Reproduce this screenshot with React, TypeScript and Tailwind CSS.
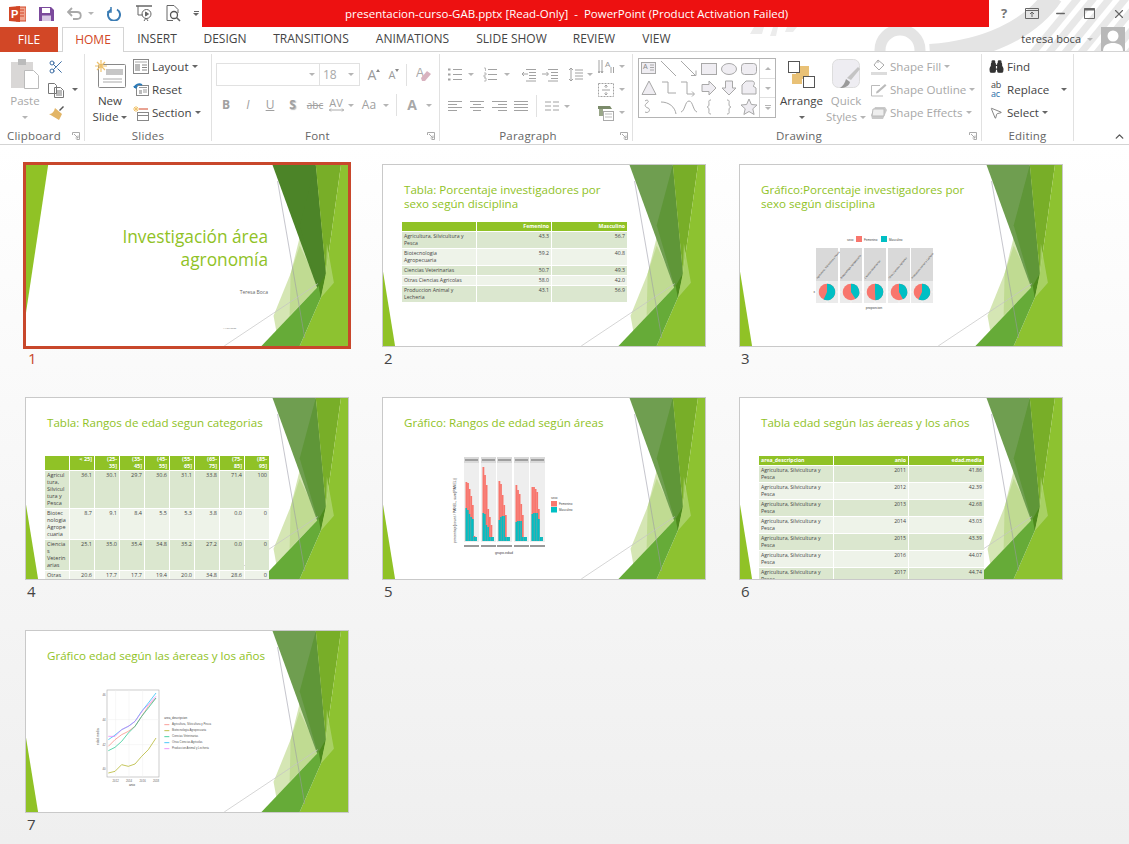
import React from 'react';
import { Binoculars, Scissors, X, Minus, ChevronUp, MousePointer2 } from 'lucide-react';

const tabs = [
  { label: 'INSERT', w: 'w-[66px]' },
  { label: 'DESIGN', w: 'w-[70px]' },
  { label: 'TRANSITIONS', w: 'w-[102px]' },
  { label: 'ANIMATIONS', w: 'w-[101px]' },
  { label: 'SLIDE SHOW', w: 'w-[97px]' },
  { label: 'REVIEW', w: 'w-[68px]' },
  { label: 'VIEW', w: 'w-[57px]' },
];

const GREEN = '#90c226';
const RED = '#f8766d';
const TEAL = '#00bfc4';
const G = '#a2a2a2';

const Caret = ({ dark, className = '' }: { dark?: boolean; className?: string }) => (
  <span className={`inline-block h-0 w-0 border-x-[3px] border-t-[3px] border-x-transparent ${dark ? 'border-t-[#666]' : 'border-t-[#b5b5b5]'} ${className}`} />
);

const Group = ({ label, launcher, className, children }: { label: string; launcher?: boolean; className: string; children: React.ReactNode }) => (
  <div className={`flex h-[87px] shrink-0 flex-col border-r border-[#e1e1e1] ${className}`}>
    <div className="flex-1 pt-px">{children}</div>
    <div className="-mb-[2px] flex h-[15px] items-center text-[11.5px] leading-none text-[#666]">
      <span className="flex-1 text-center tracking-[0.2px]">{label}</span>
      {launcher && (
        <span className="flex w-[16px] justify-center">
          <svg width="8" height="8" viewBox="0 0 8 8" fill="none" stroke="#aaa"><path d="M.5 3V.5H7.5V7.5H4.5M2 2l4 4M6 3.5V6H3.5" /></svg>
        </span>
      )}
    </div>
  </div>
);

const Row = ({ icon, text, dim, caret, className = '' }: { icon: React.ReactNode; text: string; dim?: boolean; caret?: React.ReactNode; className?: string }) => (
  <div className={`flex h-[23px] items-center whitespace-nowrap text-[11.6px] ${dim ? 'text-[#a8a8a8]' : 'text-[#444]'} ${className}`}>
    <span className="flex w-[16px] justify-center">{icon}</span>
    <span className="ml-[3px]">{text}</span>
    {caret}
  </div>
);

const Lines = ({ rows }: { rows: number[][] }) => (
  <svg width="15" height="15" viewBox="0 0 15 15" stroke={G} strokeWidth="1" fill="none">
    {rows.map((r, i) => <path key={i} d={`M${r[0]} ${2.5 + i * 3}H${r[1]}`} />)}
  </svg>
);

const LayoutIcon = () => (
  <svg width="16" height="15" viewBox="0 0 16 15" fill="none"><rect x=".5" y=".5" width="15" height="14" fill="#fff" stroke="#888" /><path d="M2 3h12" stroke="#aaa" /><rect x="2" y="5" width="5" height="7" fill="#bbb" /><path d="M9 6h5M9 8.5h5M9 11h5" stroke="#888" /></svg>
);
const ResetIcon = () => (
  <svg width="16" height="15" viewBox="0 0 16 15" fill="none"><rect x="3.5" y="3.5" width="12" height="10" fill="#fff" stroke="#888" /><rect x="6" y="8" width="3" height="4" fill="#bbb" /><path d="M10 8h4M10 10h4M6 5.5h8" stroke="#999" /><path d="M1.5 6C2 2.5 6 1 9 3" stroke="#2a7ab8" strokeWidth="1.6" /><path d="M0 4l3 3 2-3z" fill="#2a7ab8" /></svg>
);
const SectionIcon = () => (
  <svg width="16" height="16" viewBox="0 0 16 16" fill="none"><path d="M3 1v6M0 4h6M1 2l4 4M5 2l-4 4" stroke="#f0c36d" /><path d="M6 4h9" stroke="#d24726" /><rect x="4.5" y="7.5" width="11" height="3" stroke="#888" fill="#fff" /><rect x="4.5" y="10.5" width="11" height="5" stroke="#888" fill="#fff" /></svg>
);

const Gallery = () => {
  const s = { fill: 'none', stroke: '#a8a8a8', strokeWidth: 1 };
  const f = { fill: '#efedf2', stroke: '#a8a8a8', strokeWidth: 1 };
  const cells = [
    <g><rect x="2.5" y="3.5" width="14" height="11" {...f} /><path d="M11 6h4M11 8.5h4M11 11h4" {...s} /><text x="4" y="10" fontSize="7" fill="#888" fontFamily="Liberation Sans">A</text></g>,
    <path d="M2 2l15 15" {...s} />,
    <path d="M2 2l15 15M12 16.5h5v-5" {...s} />,
    <rect x="2.5" y="4.5" width="15" height="11" {...f} />,
    <ellipse cx="10" cy="10" rx="7.5" ry="5.5" {...f} />,
    <rect x="2.5" y="4.5" width="15" height="11" rx="3" {...f} />,
    <path d="M3 16.5L10 3l7 13.5z" {...f} />,
    <path d="M3 4h6v11h8" {...s} />,
    <path d="M2 4h6v12h7M13 13.5l2.5 2.5-2.5 2.5" {...s} />,
    <path d="M3 6.5h7V3l7 7-7 7v-3.5H3z" {...f} />,
    <path d="M6.5 3h7v7H17l-7 7-7-7h3.5z" {...f} />,
    <path d="M3 16V7l4-4h6c3 0 3 4 1 5l3 2v6z" {...f} />,
    <path d="M6 15c4 2 6-3 3-4s-4-3-1-5 0-4-2-2" {...s} />,
    <path d="M2 5c8 0 14 5 15 12" {...s} />,
    <path d="M2 15C6 14 6 4 10 4s4 10 8 11" {...s} />,
    <path d="M12 3c-3 0-2 2-2 4s-1 3-2 3c1 0 2 1 2 3s-1 4 2 4" {...s} />,
    <path d="M8 3c3 0 2 2 2 4s1 3 2 3c-1 0-2 1-2 3s1 4-2 4" {...s} />,
    <path d="M10 2l2.4 5.5 5.6.5-4.2 3.800 1.300 5.700-5.100-3-5.100 3 1.300-5.700L2 8l5.600-.5z" {...f} />,
  ];
  return (
    <div className="mt-[3px] flex h-[60px] w-[138px] border border-[#b4b4b4]">
      <div className="grid w-[120px] grid-cols-6 grid-rows-3">
        {cells.map((c, i) => (
          <span key={i} className="flex items-center justify-center"><svg width="20" height="20" viewBox="0 0 20 20">{c}</svg></span>
        ))}
      </div>
      <div className="flex w-[16px] flex-col border-l border-[#d0d0d0]">
        <span className="flex h-[20px] items-center justify-center border-b border-[#e0e0e0]"><span className="h-0 w-0 border-x-[3px] border-b-[3px] border-x-transparent border-b-[#b5b5b5]" /></span>
        <span className="flex h-[19px] items-center justify-center border-b border-[#e0e0e0]"><Caret /></span>
        <span className="flex h-[19px] flex-col items-center justify-center gap-[1px]"><span className="h-px w-[6px] bg-[#b5b5b5]" /><Caret /></span>
      </div>
    </div>
  );
};

const Ribbon = () => (
  <div className="relative flex h-[93px] shrink-0 border-b border-[#d4d4d4] bg-white pt-[2px]">
    <Group label="Clipboard" launcher className="w-[85px]">
      <div className="flex pl-[8px]">
        <div className="flex w-[34px] flex-col items-center text-[11.5px] text-[#a8a8a8]">
          <div className="flex h-[38px] items-center">
            <svg width="29" height="31" viewBox="0 0 29 31"><rect x="0" y="3" width="22" height="26" fill="#d9d7d6" /><rect x="7" y="0" width="8" height="6" fill="#bbb" /><path d="M13.500 11.500h9l5 5v13h-14z" fill="#fff" stroke="#bbb" /></svg>
          </div>
          <span className="leading-[16px]">Paste</span>
          <span className="flex h-[16px] items-center"><Caret /></span>
        </div>
        <div className="ml-[6px] flex flex-col">
          <div className="flex h-[23px] items-center"><Scissors size={16} color="#3f6fa5" strokeWidth={1.5} /></div>
          <div className="flex h-[23px] items-center">
            <svg width="16" height="16" viewBox="0 0 16 16" fill="#fff" stroke="#777"><path d="M.5 1.500h6l2 2v8h-8zM6.500 5.500h6l3 3v7h-9z" /><path d="M8 9h6M8 11h6M8 13h6" /></svg>
            <Caret dark className="ml-[8px]" />
          </div>
          <div className="flex h-[23px] items-center">
            <svg width="17" height="16" viewBox="0 0 17 16"><path d="M11 5l4-4 1 1-4 4z" fill="#555" /><path d="M7 3l7 6-3 6-10-6c3 0 5-2 6-6z" fill="#e2b566" /></svg>
          </div>
        </div>
      </div>
    </Group>

    <Group label="Slides" className="w-[127px]">
      <div className="flex pl-[7px]">
        <div className="flex w-[36px] flex-col items-center text-[11.6px] text-[#444]">
          <div className="flex h-[38px] items-center">
            <svg width="31" height="29" viewBox="0 0 31 29" fill="none"><rect x="3.500" y="4.500" width="27" height="23" rx="1" fill="#fff" stroke="#888" /><rect x="11" y="9" width="17" height="6" fill="#c6c6c6" /><path d="M8 19h19M8 22h19" stroke="#aaa" /><path d="M6 0v12M0 6h12M2 2l8 8M10 2l-8 8" stroke="#f0c36d" strokeWidth="1.200" /></svg>
          </div>
          <span className="leading-[16px]">New</span>
          <span className="flex items-center gap-[3px] whitespace-nowrap leading-[16px]">Slide<Caret dark /></span>
        </div>
        <div className="ml-[5px] flex flex-col">
          <Row icon={<LayoutIcon />} text="Layout" caret={<Caret dark className="ml-[3px]" />} />
          <Row icon={<ResetIcon />} text="Reset" />
          <Row icon={<SectionIcon />} text="Section" caret={<Caret dark className="ml-[3px]" />} />
        </div>
      </div>
    </Group>

    <Group label="Font" launcher className="w-[228px]">
      <div className="flex items-center pl-[4px] pt-[8px]">
        <div className="flex h-[23px] w-[104px] items-center justify-end border border-[#e1e1e1] pr-[4px]"><Caret /></div>
        <div className="-ml-px flex h-[23px] w-[41px] items-center justify-between border border-[#e1e1e1] px-[3px] pr-[5px] text-[12px] text-[#a8a8a8]">18<Caret /></div>
        <span className="ml-[6px] flex w-[16px] items-start justify-center text-[14px] leading-none text-[#9b9b9b]">A<span className="mt-[1px] h-0 w-0 border-x-[2px] border-b-[3px] border-x-transparent border-b-[#888]" /></span>
        <span className="ml-[5px] flex w-[14px] items-start justify-center text-[11px] leading-none text-[#9b9b9b]">A<span className="h-0 w-0 border-x-[2px] border-t-[3px] border-x-transparent border-t-[#888]" /></span>
        <span className="ml-[5px] h-[22px] w-px bg-[#e1e1e1]" />
        <svg className="ml-[9px]" width="15" height="17" viewBox="0 0 15 17"><text x="0" y="11" fontSize="12" fill="#aaa" fontFamily="Liberation Sans">A</text><path d="M5 12l6-7 4 3-6 7H6z" fill="#d9b3c0" /></svg>
      </div>
      <div className="mt-[7px] flex h-[24px] items-center pl-[3px] text-[12px] leading-none text-[#a0a0a0]">
        <span className="w-[22px] text-center font-bold">B</span>
        <span className="w-[22px] text-center italic">I</span>
        <span className="w-[22px] text-center underline">U</span>
        <span className="w-[23px] text-center font-bold [text-shadow:1px_1px_1px_#bbb]">S</span>
        <span className="w-[22px] text-center text-[10px] line-through">abc</span>
        <span className="flex w-[20px] flex-col items-center text-[11px] leading-[10px]">AV<svg width="15" height="4" viewBox="0 0 15 4" fill="none" stroke="#aaa"><path d="M0 2h15M2 .5L.5 2 2 3.500M13 .5L14.500 2 13 3.500" /></svg></span>
        <span className="flex w-[10px] justify-center"><Caret /></span>
        <span className="w-[26px] text-center text-[12px]">Aa</span>
        <span className="flex w-[7px] justify-center"><Caret /></span>
        <span className="ml-[7px] h-[22px] w-px bg-[#e1e1e1]" />
        <span className="w-[30px] text-center text-[14px] font-bold text-[#a8a8a8]">A</span>
        <span className="flex w-[4px] justify-center"><Caret /></span>
      </div>
    </Group>

    <Group label="Paragraph" launcher className="w-[193px]">
      <div className="flex pl-[8px]">
        <div className="w-[150px]">
          <div className="mt-[8px] flex h-[23px] items-center">
            <svg width="14" height="15" viewBox="0 0 14 15" stroke={G} fill="none"><path d="M5 2.500h9M5 7.500h9M5 12.500h9" /><path d="M0 2.500h2.500M0 7.500h2.500M0 12.500h2.500" strokeWidth="2" /></svg>
            <Caret className="ml-[6px]" />
            <svg className="ml-[9px]" width="14" height="15" viewBox="0 0 14 15" stroke={G} fill="none"><path d="M5 2.500h9M5 7.500h9M5 12.500h9" /><path d="M1 1h1.500v3M1 6h2v2H1v2h2M1 11h2v3H1" strokeWidth=".7" /></svg>
            <Caret className="ml-[7px]" />
            <svg className="ml-[11px]" width="15" height="14" viewBox="0 0 15 14" stroke={G} fill="none"><path d="M5 1.500h10M8 4.500h7M8 7.500h7M8 10.500h7M5 13h10M7 6H1M3 4L1 6l2 2" /></svg>
            <svg className="ml-[6px]" width="16" height="14" viewBox="0 0 16 14" stroke={G} fill="none"><path d="M6 1.500h10M9 4.500h7M9 7.500h7M9 10.500h7M6 13h10M0 6h6M4.500 4l2 2-2 2" /></svg>
            <svg className="ml-[10px]" width="15" height="15" viewBox="0 0 15 15" stroke={G} fill="none"><path d="M7 3h8M7 6h8M7 9h8M7 12h8M3 1v13M1 3l2-2 2 2M1 12l2 2 2-2" /></svg>
            <Caret className="ml-[4px]" />
          </div>
          <div className="mt-[8px] flex h-[24px] items-center">
            <Lines rows={[[0, 14], [0, 9], [0, 14], [0, 9]]} />
            <span className="ml-[7px]"><Lines rows={[[0, 14], [3, 11], [0, 14], [3, 11]]} /></span>
            <span className="ml-[7px]"><Lines rows={[[0, 15], [6, 15], [0, 15], [6, 15]]} /></span>
            <span className="ml-[7px]"><Lines rows={[[0, 14], [0, 14], [0, 14], [0, 14]]} /></span>
            <span className="ml-[7px] h-[22px] w-px bg-[#e1e1e1]" />
            <svg className="ml-[8px]" width="14" height="13" viewBox="0 0 14 13" stroke={G}><path d="M0 2h6M8 2h6M0 6h6M8 6h6M0 10h6M8 10h6" /></svg>
            <Caret className="ml-[5px]" />
          </div>
        </div>
        <div className="flex flex-col">
          <div className="flex h-[23px] items-center">
            <svg width="16" height="16" viewBox="0 0 16 16" fill="none" stroke={G}><path d="M1 1v13M4 1v13M0 12l1 2 1-2M3 12l1 2 1-2M13 8v6M15.500 8v6" /><text x="7" y="8" fontSize="8" fill="#999" stroke="none" fontFamily="Liberation Sans">A</text></svg>
            <Caret className="ml-[5px]" />
          </div>
          <div className="flex h-[23px] items-center">
            <svg width="16" height="16" viewBox="0 0 16 16" fill="none" stroke={G}><path d="M.5 1.500h15v13H.5z" strokeDasharray="2 1" /><path d="M4 8h8M8 3v3M6.500 4.500L8 3l1.500 1.500M8 13v-3M6.500 11.500L8 13l1.500-1.500" /></svg>
            <Caret className="ml-[5px]" />
          </div>
          <div className="flex h-[23px] items-center">
            <svg width="16" height="16" viewBox="0 0 16 16"><path d="M0 1h12l2 3H0z" fill="#7b8b6a" /><rect x="5.500" y="6.500" width="10" height="9" fill="#fff" stroke="#aaa" /><path d="M7 9h7M7 12h7" stroke="#bbb" /><rect x="1" y="4" width="4" height="7" fill="#9aa78a" /></svg>
            <Caret className="ml-[5px]" />
          </div>
        </div>
      </div>
    </Group>

    <Group label="Drawing" launcher className="w-[349px]">
      <div className="flex pl-[5px]">
        <Gallery />
        <div className="ml-[5px] flex w-[41px] flex-col items-center text-[11.5px] text-[#444]">
          <div className="flex h-[38px] items-center">
            <svg width="27" height="27" viewBox="0 0 27 27"><rect x="8" y="5" width="13" height="13" fill="#e9c176" /><rect x="4" y="13" width="10" height="10" fill="#e9c176" /><rect x=".5" y=".5" width="11" height="11" fill="#fff" stroke="#555" /><rect x="15.500" y="15.500" width="11" height="11" fill="#fff" stroke="#555" /></svg>
          </div>
          <span className="leading-[16px]">Arrange</span>
          <span className="flex h-[16px] items-center"><Caret dark /></span>
        </div>
        <div className="ml-[3px] flex w-[42px] flex-col items-center text-[11.5px] text-[#a8a8a8]">
          <div className="flex h-[38px] items-center">
            <svg width="29" height="31" viewBox="0 0 29 31"><rect x=".5" y=".5" width="27" height="28" rx="6" fill="#eeedf2" stroke="#ddd" /><path d="M26 8l2 2-9 11-4-2z" fill="#c4c4c4" /><path d="M14 20l4 3c-1 4-5 6-10 6 3-2 5-5 6-9z" fill="#9a9a9a" /></svg>
          </div>
          <span className="leading-[16px]">Quick</span>
          <span className="flex items-center gap-[3px] whitespace-nowrap leading-[16px]">Styles<Caret /></span>
        </div>
        <div className="ml-[4px] flex flex-col">
          <Row dim text="Shape Fill" caret={<Caret className="ml-[3px]" />} icon={<svg width="16" height="16" viewBox="0 0 16 16" fill="none"><path d="M7 1l6 5-5 5-5-5z" stroke="#aaa" /><path d="M7 1v3" stroke="#aaa" /><path d="M0 13h16v3H0z" fill="#dcdcdc" /></svg>} />
          <Row dim text="Shape Outline" caret={<Caret className="ml-[3px]" />} icon={<svg width="16" height="14" viewBox="0 0 16 14" fill="none"><path d="M12 13H.5V2.500H9" stroke="#bbb" /><path d="M14 1l1.500 1.500L7 10l-2 .5.5-2z" fill="#bbb" /></svg>} />
          <Row dim text="Shape Effects" caret={<Caret className="ml-[3px]" />} icon={<svg width="16" height="14" viewBox="0 0 16 14"><path d="M4 1h10l2 3-4 9H1L0 9z" fill="#c9c9c9" /><path d="M2 3h11v7H1z" fill="#eee" stroke="#bbb" /></svg>} />
        </div>
      </div>
    </Group>

    <Group label="Editing" className="w-[92px]">
      <div className="flex flex-col pl-[6px]">
        <Row icon={<Binoculars size={15} color="#333" fill="#333" />} text="Find" />
        <Row icon={<span className="flex flex-col gap-px text-[9px] leading-[8px] tracking-[-0.3px]"><span className="text-[#444]">ab</span><span className="text-[#2a6ea8]">ac</span></span>} text="Replace" caret={<Caret dark className="ml-[12px]" />} />
        <Row icon={<MousePointer2 size={14} color="#555" strokeWidth={1.2} />} text="Select" caret={<Caret dark className="ml-[3px]" />} />
      </div>
    </Group>

    <div className="flex flex-1 items-end justify-end pb-[1px] pr-[3px]"><ChevronUp size={13} color="#555" strokeWidth={2.5} /></div>
  </div>
);

const HeaderPattern = () => (
  <svg className="absolute right-0 top-0" width="400" height="52" viewBox="729 0 400 52" fill="none">
    <path d="M930 54C985 50 1030 30 1053 -4" stroke="#e4e4e4" strokeWidth="20" />
    <circle cx="900" cy="50" r="20" stroke="#e4e4e4" strokeWidth="11" />
    <path d="M750 34l4-7h10l-2 7zM770 36l3-9h5l-2 9zM785 32l2-5h10l-4 5z" fill="#ececec" />
    {[0, 1, 2, 3, 4, 5, 6, 7].map(i => <path key={i} d={`M${1032 + i * 16} 54L${1078 + i * 16} -2`} stroke="#e8e8e8" strokeWidth="7" />)}
  </svg>
);

const Header = () => (
  <header className="relative h-[52px] shrink-0 bg-white">
    <HeaderPattern />
    <div className="relative flex h-[27px]">
      <div className="flex w-[202px] items-center pl-[9px]">
        <svg width="17" height="16" viewBox="0 0 17 16"><path d="M7 1h10v14H7z" fill="#f0a58f" stroke="#d24726" /><path d="M10 4h5M10 7h5M10 10h5" stroke="#d24726" /><path d="M0 1l11-1v16L0 15z" fill="#d24726" /><text x="2" y="12" fontSize="11" fontWeight="700" fill="#fff" fontFamily="Liberation Sans">P</text></svg>
        <svg className="ml-[13px]" width="15" height="14" viewBox="0 0 15 14"><path d="M0 0h12l3 3v11H0z" fill="#7b4a9c" /><rect x="3" y="1" width="8" height="5" fill="#fff" /><rect x="3" y="8.500" width="9" height="5.500" fill="#d8c8e4" /></svg>
        <svg className="ml-[13px]" width="15" height="13" viewBox="0 0 15 13" fill="none" stroke="#a9a9a9" strokeWidth="1.800"><path d="M1 5h9c5 0 5 7 0 7H6" /><path d="M5 1L1 5l4 4" /></svg>
        <Caret className="ml-[6px]" />
        <svg className="ml-[13px]" width="14" height="14" viewBox="0 0 14 14" fill="none" stroke="#3b7cb4" strokeWidth="2"><path d="M4 2.500a6 6 0 1 0 6 0" /><path d="M4 0v5H0" strokeWidth="1.500" /></svg>
        <svg className="ml-[15px]" width="16" height="17" viewBox="0 0 16 17" fill="none" stroke="#666"><path d="M0 1h16" strokeWidth="1.500" /><path d="M2 1v9h5" /><circle cx="10.500" cy="9" r="4.500" /><path d="M9.500 7l3 2-3 2z" fill="#666" /><path d="M8 16l2-3 2 3" /></svg>
        <svg className="ml-[14px]" width="15" height="17" viewBox="0 0 15 17" fill="none" stroke="#666"><path d="M1 .5h7l4 4V8M1 .5v15h6" /><circle cx="8" cy="10" r="3.500" stroke="#555" strokeWidth="1.300" /><path d="M10.500 12.500L14 16" strokeWidth="1.600" /></svg>
        <span className="ml-[12px] flex flex-col items-center gap-[1px]"><span className="h-px w-[5px] bg-[#666]" /><Caret dark /></span>
      </div>
      <div className="flex w-[787px] items-center bg-[#ed1111] pl-[143px] text-[11.500px] whitespace-pre text-white">
        presentacion-curso-GAB.pptx [Read-Only]  -  PowerPoint (Product Activation Failed)
      </div>
      <div className="flex flex-1 items-center text-[#666]">
        <span className="ml-[11px] w-[8px] text-center text-[13px] font-bold text-[#777]">?</span>
        <svg className="ml-[17px]" width="14" height="11" viewBox="0 0 14 11" fill="none" stroke="#666"><path d="M.5.500h13v10H.5zM.5 2.500h13M7 9V4M5 6l2-2 2 2" /></svg>
        <Minus className="ml-[15px]" size={13} strokeWidth={2.5} />
        <svg className="ml-[17px]" width="11" height="11" viewBox="0 0 11 11" fill="none" stroke="#666"><path d="M.5.500h10v10H.5z" /><path d="M0 1.500h11" strokeWidth="2" /></svg>
        <X className="ml-[17px]" size={14} strokeWidth={2} />
      </div>
    </div>
    <div className="relative flex h-[25px] border-b border-[#d4d4d4] text-[12px] text-[#444]">
      <div className="flex h-[25px] w-[58px] items-center justify-center bg-[#d24726] text-white">FILE</div>
      <div className="z-10 ml-[4px] flex h-[25px] w-[62px] items-center justify-center border border-b-0 border-[#d4d4d4] bg-white text-[#d24726]">HOME</div>
      {tabs.map(t => (
        <div key={t.label} className={`flex items-center justify-center ${t.w}`}>{t.label}</div>
      ))}
      <div className="ml-auto flex items-center">
        <span className="text-[11px] text-[#444]">teresa boca</span>
        <Caret className="ml-[6px]" />
        <svg className="ml-[8px] mr-[4px]" width="24" height="24" viewBox="0 0 24 24"><rect width="24" height="24" fill="#b8b8b8" /><circle cx="12" cy="9" r="5.500" fill="#fff" /><path d="M2 24c0-6 5-8 10-8s10 2 10 8z" fill="#fff" /></svg>
      </div>
    </div>
  </header>
);

// background art shared by the thumbnails
const SlideArt = ({ title }: { title?: boolean }) => (
  <svg className="absolute inset-0 h-full w-full" viewBox="0 0 320 180" preserveAspectRatio="none">
    {title ? <polygon points="0,0 22,0 0,147" fill={GREEN} /> : <polygon points="0,106 12,180 0,180" fill={GREEN} />}
    <polygon points="275,60 293,118 250,172 246,150 263,108" fill="#c3dc94" opacity=".7" />
    <polygon points="272,80 291,120 262,150 263,108" fill="#b3d37c" opacity=".6" />
    <polygon points="245,0 288,0 298,108 293,132" fill={title ? '#4c8428' : '#6f9e50'} />
    <polygon points="288,0 298,108 293,132 272,60" fill={title ? '#4c8428' : '#5f9638'} />
    <polygon points="288,0 313,0 298,108" fill="#78ae28" />
    <polygon points="313,0 320,0 320,180 272,180 293,132 298,108" fill="#8dc230" />
    <polygon points="234,180 291,120 293,132 272,180" fill="#66ab38" />
    <polygon points="291,120 298,108 293,132" fill="#4d8a1c" />
    <polygon points="293,132 306,117 299,78 298,108" fill="#b4d77a" opacity=".7" />
    <path d="M250 16L277 172" stroke="#9a9aa6" strokeWidth=".7" opacity=".8" />
    <path d="M197 180L290 118" stroke="#c5c5c5" strokeWidth=".7" />
  </svg>
);

const Frame = ({ n, active, title, children }: { n: number; active?: boolean; title?: boolean; children?: React.ReactNode }) => (
  <div className="flex flex-col">
    <div className={`relative h-[183px] w-[324px] overflow-hidden border bg-white ${active ? 'border-white outline-[3px] -outline-offset-1 outline-[#c8472b]' : 'border-[#c9c9c9]'}`}>
      <SlideArt title={title} />
      <div className="relative h-full w-full font-['Open_Sans',sans-serif]">{children}</div>
    </div>
    <span className={`mt-[3px] text-[15px] leading-[16px] ${active ? 'pl-[3px] text-[#c8472b]' : 'pl-[2px] text-[#444]'}`}>{n}</span>
  </div>
);

const SlideTitle = ({ children }: { children: React.ReactNode }) => (
  <h2 className="pl-[21px] pt-[18px] text-[11.600px] leading-[14px] whitespace-pre-line text-[#90c226]">{children}</h2>
);

const Table = ({ cols, head, rows, className, headPy }: { cols: string; head: string[]; rows: string[][]; className: string; headPy?: string }) => (
  <div className={`ml-[19px] grid gap-x-px text-[#444] ${cols} ${className}`}>
    {head.map((h, i) => (
      <div key={i} className={`border-b border-white bg-[#90c226] px-[2px] font-bold whitespace-pre-line text-white ${headPy ?? ''} ${i === 0 ? 'text-left' : 'text-right'}`}>{h}</div>
    ))}
    {rows.map((r, ri) =>
      r.map((c, ci) => (
        <div key={`${ri}-${ci}`} className={`border-b border-white px-[2px] py-px whitespace-pre-line ${ri % 2 ? 'bg-[#eef3e9]' : 'bg-[#dbe7cf]'} ${ci === 0 ? 'text-left' : 'text-right'}`}>{c}</div>
      ))
    )}
  </div>
);

const pieShare = [56.7, 40.8, 49.3, 42, 56.9];
const stripNames = ['Agricultura, Silvicultura y Pesca', 'Biotecnologia Agropecuaria', 'Ciencias Veterinarias', 'Otras Ciencias Agricolas', 'Produccion Animal y Lecheria'];

const PieChart = () => (
  <svg className="ml-[60px] mt-[21px]" width="140" height="80" viewBox="0 0 140 80" fontFamily="Liberation Sans">
    <text x="47" y="8.500" fontSize="3" fill="#444">sexo</text>
    <rect x="56" y="4" width="6" height="6" fill={RED} />
    <text x="64" y="8.500" fontSize="3" fill="#444">Femenino</text>
    <rect x="81" y="4" width="6" height="6" fill={TEAL} />
    <text x="89" y="8.500" fontSize="3" fill="#444">Masculino</text>
    {[16, 40, 64, 88, 111].map((x, i) => {
      const cx = x + 11, cy = 60, r = 8.3;
      const a = (pieShare[i] / 100) * 2 * Math.PI;
      const ex = cx + r * Math.sin(a), ey = cy - r * Math.cos(a);
      return (
        <g key={x}>
          <rect x={x} y="16" width="22" height="33" fill="#d9d9d9" />
          <rect x={x} y="49" width="22" height="22" fill="#ebebeb" />
          <path d={`M${x} 60h22M${cx} 49v22`} stroke="#fff" strokeWidth=".5" />
          <circle cx={cx} cy={cy} r={r} fill={RED} />
          <path d={`M${cx} ${cy}V${cy - r}A${r} ${r} 0 ${pieShare[i] > 50 ? 1 : 0} 1 ${ex} ${ey}Z`} fill={TEAL} />
          <text transform={`translate(${x + 1.500} 47) rotate(-50)`} fontSize="2.500" fill="#333">{stripNames[i]}</text>
        </g>
      );
    })}
    <text x="15" y="61" textAnchor="end" fontSize="3" fill="#333">x</text>
    <text x="74" y="77" textAnchor="middle" fontSize="3.500" fill="#444">proporcion</text>
  </svg>
);

const barData = [
  [[59, 33], [58, 31], [52, 27], [45, 24], [36, 22], [5, 4], [4, 4]],
  [[74, 28], [66, 27], [56, 16], [32, 14], [24, 4], [16, 4], [4, 4]],
  [[60, 21], [57, 24], [46, 25], [36, 25], [26, 4], [4, 4], [4, 4]],
  [[56, 19], [51, 20], [47, 20], [37, 20], [26, 4], [4, 4], [4, 4]],
  [[54, 27], [54, 28], [52, 28], [49, 28], [32, 22], [4, 4], [4, 4]],
];

const BarChart = () => (
  <svg className="ml-[67px] mt-[25px]" width="130" height="105" viewBox="0 0 130 105" fontFamily="Liberation Sans">
    {[14, 31, 47, 64, 80].map((x, p) => (
      <g key={x}>
        <rect x={x} y="2" width="15" height="6" fill="#d9d9d9" />
        <path d={`M${x + 1} 5h13`} stroke="#999" strokeWidth="1.800" />
        <rect x={x} y="8" width="15" height="79" fill="#eeeeee" />
        {barData[p].map(([tot, teal], i) => (
          <g key={i}>
            <rect x={x + 1.500 + i * 1.600} y={86 - tot} width="1.800" height={tot} fill={RED} />
            <rect x={x + 1.500 + i * 1.600} y={86 - teal} width="1.800" height={teal} fill={TEAL} />
          </g>
        ))}
        <path d={`M${x} 91h15`} stroke="#999" strokeWidth="2" />
      </g>
    ))}
    <text transform="translate(6 88) rotate(-90)" fontSize="3.600" fill="#444">porcentaje(count / PANEL, sum(PANEL))</text>
    <text x="54" y="98.500" textAnchor="middle" fontSize="3.600" fill="#444">grupo.edad</text>
    <text x="101" y="43.500" fontSize="3" fill="#444">sexo</text>
    <rect x="101" y="46" width="6" height="5.500" fill={RED} />
    <rect x="101" y="52" width="6" height="5.500" fill={TEAL} />
    <text x="109" y="50" fontSize="3" fill="#444">Femenino</text>
    <text x="109" y="56" fontSize="3" fill="#444">Masculino</text>
  </svg>
);

const lineSeries = [
  { c: '#a3a500', p: [[265, 435], [285, 430], [305, 410], [325, 415], [345, 408], [365, 385], [385, 365], [408, 330]] },
  { c: '#f8766d', p: [[265, 355], [285, 335], [305, 320], [325, 310], [345, 295], [365, 265], [385, 235], [408, 210]] },
  { c: '#00bf7d', p: [[265, 368], [285, 358], [305, 340], [325, 315], [345, 295], [365, 265], [385, 240], [408, 210]] },
  { c: '#00b0f6', p: [[265, 335], [280, 325], [305, 305], [325, 295], [345, 280], [365, 250], [385, 225], [408, 195]] },
  { c: '#e76bf3', p: [[265, 325], [285, 325], [305, 305], [330, 292], [345, 280], [370, 245], [385, 230], [408, 205]] },
];
const legendRows = [
  ['Agricultura, Silvicultura y Pesca', '#f8766d'],
  ['Biotecnologia Agropecuaria', '#a3a500'],
  ['Ciencias Veterinarias', '#00bf7d'],
  ['Otras Ciencias Agricolas', '#00b0f6'],
  ['Produccion Animal y Lecheria', '#e76bf3'],
];
const zx = (v: number) => v / 3 - 80;
const zy = (v: number) => v / 3 - 52;

const LineChart = () => (
  <svg className="ml-[74px] mt-[17px] overflow-visible" width="140" height="110" viewBox="0 0 140 110" fontFamily="Liberation Sans">
    <rect x="7" y="10" width="52" height="87" fill="#fff" stroke="#aaa" strokeWidth=".6" />
    {[275, 350].map(v => <path key={v} d={`M7 ${zy(v)}h52`} stroke="#eee" strokeWidth=".5" />)}
    {[287, 327, 368].map(v => <path key={v} d={`M${zx(v)} 10v87`} stroke="#eee" strokeWidth=".5" />)}
    {lineSeries.map(s => (
      <polyline key={s.c} points={s.p.map(([x, y]) => `${zx(x)},${zy(y)}`).join(' ')} fill="none" stroke={s.c} strokeWidth=".8" opacity=".8" />
    ))}
    {[['46', 200], ['44', 275], ['42', 350], ['40', 423]].map(([l, v]) => (
      <text key={l} x="5.500" y={zy(Number(v)) + 1} textAnchor="end" fontSize="2.800" fill="#666">{l}</text>
    ))}
    {[['2012', 287], ['2014', 327], ['2016', 368], ['2018', 408]].map(([l, v]) => (
      <text key={l} x={zx(Number(v))} y="101.500" textAnchor="middle" fontSize="2.800" fill="#666">{l}</text>
    ))}
    <text transform={`translate(${zx(238)} 65) rotate(-90)`} fontSize="3.200" fill="#444">edad.media</text>
    <text x={zx(336)} y="106" textAnchor="middle" fontSize="3.200" fill="#444">anio</text>
    <text x={zx(433)} y={zy(272)} fontSize="3" fill="#444">area_descripcion</text>
    {legendRows.map(([l, c], i) => (
      <g key={l}>
        <path d={`M${zx(433)} ${zy(290 + i * 18)}h5`} stroke={c} strokeWidth=".7" />
        <text x={zx(456)} y={zy(291 + i * 18)} fontSize="2.800" fill="#555">{l}</text>
      </g>
    ))}
  </svg>
);

const agri = 'Agricultura, Silvicultura y\nPesca';

const App: React.FC = () => (
  <div className="flex h-[844px] w-[1129px] flex-col overflow-hidden font-['Open_Sans',sans-serif]">
    <Header />
    <Ribbon />
    <main className="min-h-0 flex-1 overflow-hidden bg-gradient-to-b from-white to-[#efefef] pl-[25px] pt-[19px]">
      <div className="grid grid-cols-[324px_324px_324px] grid-rows-[233px_233px_auto] gap-x-[33px]">
        <Frame n={1} active title>
          <div className="pr-[80px] pt-[60px] text-right">
            <h1 className="text-[17.300px] leading-[23px] text-[#90c226]">Investigación área<br />agronomía</h1>
            <p className="mt-[18px] text-[5px] leading-[7px] text-[#666]">Teresa Boca</p>
            <p className="ml-[197px] mt-[31px] text-left text-[2.500px] leading-[3px] text-[#777]">11/06/2020</p>
          </div>
        </Frame>
        <Frame n={2}>
          <SlideTitle>{'Tabla: Porcentaje investigadores por\nsexo según disciplina'}</SlideTitle>
          <Table
            cols="grid-cols-[74px_74px_75px]"
            className="mt-[11px] w-[225px] text-[5.200px] leading-[7px]"
            headPy="py-px"
            head={['', 'Femenino', 'Masculino']}
            rows={[
              [agri, '43.3', '56.7'],
              ['Biotecnologia\nAgropecuaria', '59.2', '40.8'],
              ['Ciencias Veterinarias', '50.7', '49.3'],
              ['Otras Ciencias Agricolas', '58.0', '42.0'],
              ['Produccion Animal y\nLecheria', '43.1', '56.9'],
            ]}
          />
        </Frame>
        <Frame n={3}>
          <SlideTitle>{'Gráfico:Porcentaje investigadores por\nsexo según disciplina'}</SlideTitle>
          <PieChart />
        </Frame>
        <Frame n={4}>
          <SlideTitle>Tabla: Rangos de edad segun categorias</SlideTitle>
          <Table
            cols="grid-cols-[24px_24px_24px_24px_24px_24px_24px_24px_24px]"
            className="mt-[26px] w-[224px] text-[5.500px] leading-[7px]"
            head={['', '< 25]', '(25-\n35]', '(35-\n45]', '(45-\n55]', '(55-\n65]', '(65-\n75]', '(75-\n85]', '(85-\n95]']}
            rows={[
              ['Agricul\ntura,\nSilvicul\ntura y\nPesca', '36.1', '30.1', '29.7', '30.6', '31.1', '33.8', '71.4', '100'],
              ['Biotec\nnologia\nAgrope\ncuaria', '8.7', '9.1', '8.4', '5.5', '5.3', '3.8', '0.0', '0'],
              ['Ciencia\ns\nVeterin\narias', '25.1', '35.0', '35.4', '34.8', '35.2', '27.2', '0.0', '0'],
              ['Otras', '20.6', '17.7', '17.7', '19.4', '20.0', '34.8', '28.6', '0'],
            ]}
          />
        </Frame>
        <Frame n={5}>
          <SlideTitle>Gráfico: Rangos de edad según áreas</SlideTitle>
          <BarChart />
        </Frame>
        <Frame n={6}>
          <SlideTitle>Tabla edad según las áereas y los años</SlideTitle>
          <Table
            cols="grid-cols-[74px_74px_75px]"
            className="mt-[26px] w-[225px] text-[5.200px] leading-[7px]"
            headPy="py-px"
            head={['area_descripcion', 'anio', 'edad.media']}
            rows={[
              [agri, '2011', '41.86'],
              [agri, '2012', '42.39'],
              [agri, '2013', '42.68'],
              [agri, '2014', '43.03'],
              [agri, '2015', '43.39'],
              [agri, '2016', '44.07'],
              [agri, '2017', '44.74'],
            ]}
          />
        </Frame>
        <Frame n={7}>
          <SlideTitle>Gráfico edad según las áereas y los años</SlideTitle>
          <LineChart />
        </Frame>
      </div>
    </main>
  </div>
);

export default App;
